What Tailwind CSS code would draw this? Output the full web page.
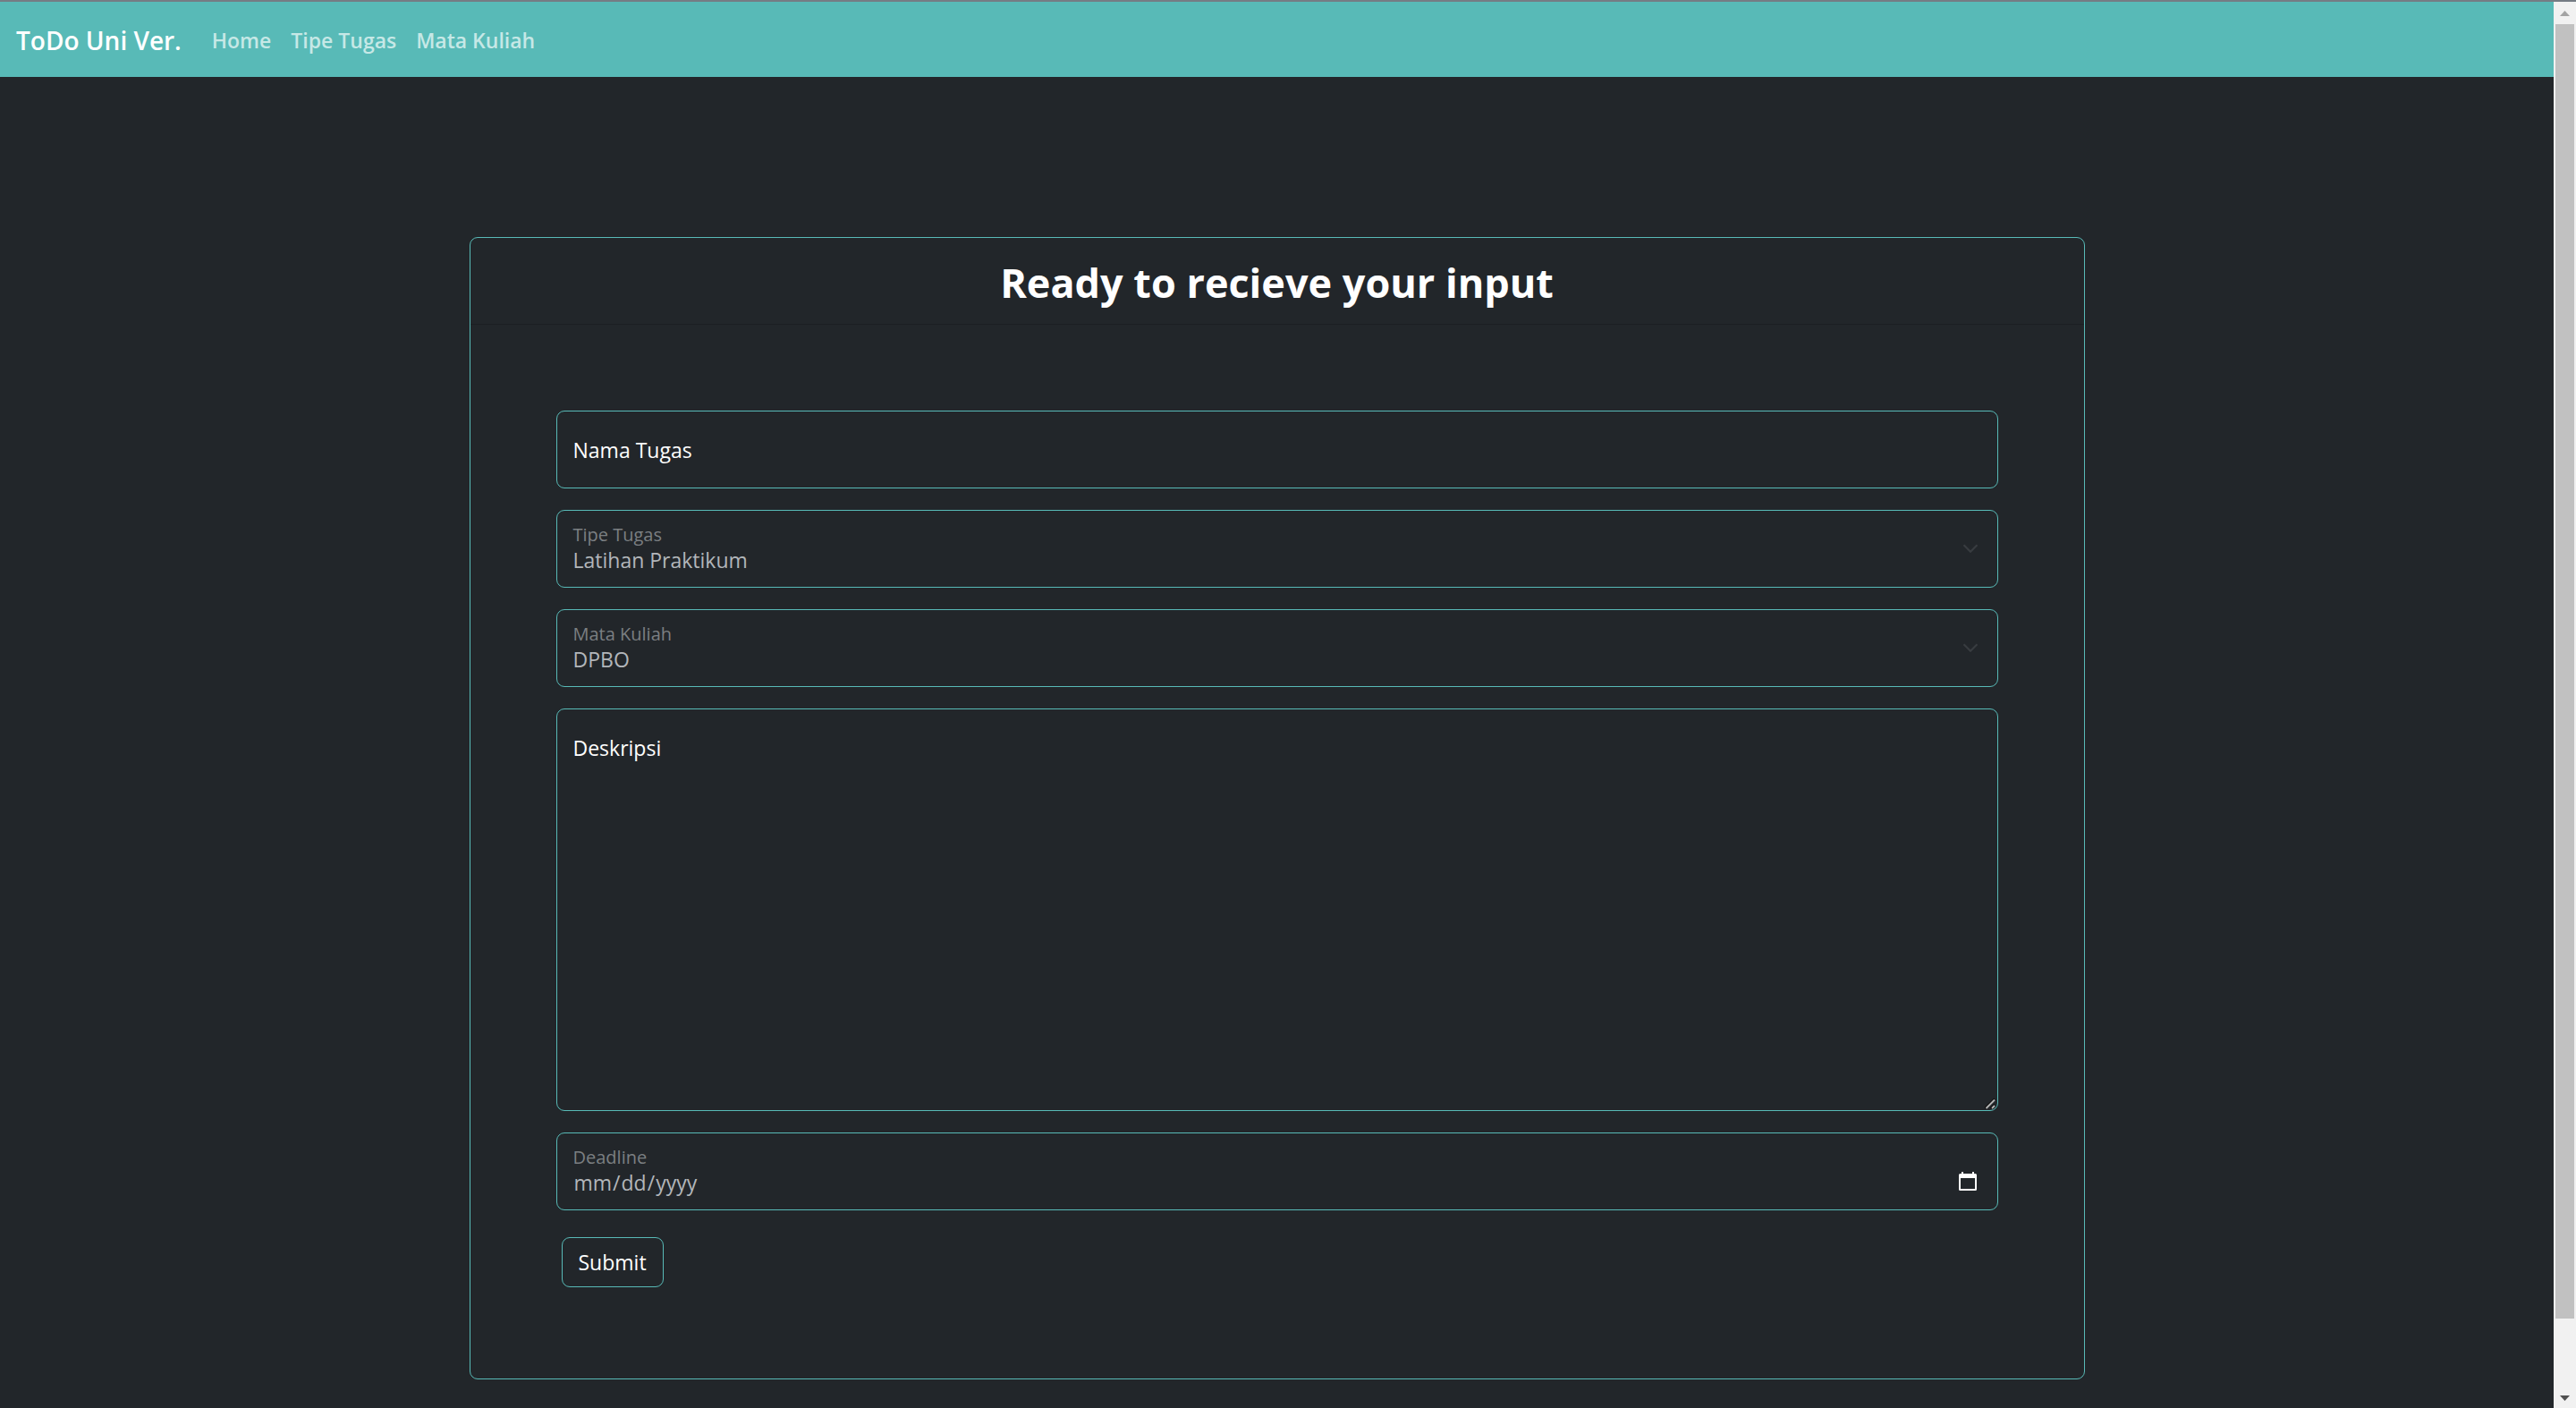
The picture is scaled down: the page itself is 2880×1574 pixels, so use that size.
<!DOCTYPE html>
<html lang="id">
<head>
<meta charset="utf-8">
<title>ToDo Uni Ver.</title>
<script src="https://cdn.jsdelivr.net/npm/@tailwindcss/browser@4"></script>
</head>
<body class="flex min-h-screen flex-col border-t-2 border-[#757c84] bg-[#22262a] font-['Open_Sans',sans-serif] text-[23px] leading-[36px] text-white">
<div class="flex grow">
  <div class="flex grow flex-col">
    <nav class="flex h-[84px] items-center bg-[#58bab7] px-[18px] pt-[2px]">
      <a href="#" class="mr-[34px] text-[28px] font-semibold">ToDo Uni Ver.</a>
      <div class="flex gap-[22px] font-semibold text-[#c6e8e6]">
        <a href="#">Home</a>
        <a href="#">Tipe Tugas</a>
        <a href="#">Mata Kuliah</a>
      </div>
    </nav>

    <main class="mx-auto mt-[179px] mb-8 w-full max-w-[1806px] rounded-[9px] border border-[#58bab7]">
      <h1 class="border-b border-[#1c1f22] pt-[22px] pb-[18px] text-center text-[45px] leading-[56px] font-bold">Ready to recieve your input</h1>

      <form class="flex flex-col gap-6 px-24 pt-24 pb-[102px]">
        <div class="flex h-[87px] items-center rounded-[9px] border border-[#58bab7] px-[18px]">
          <label for="nama">Nama Tugas</label>
          <input id="nama" type="text" class="ml-4 grow bg-transparent outline-none">
        </div>

        <div class="relative flex h-[87px] flex-col justify-center rounded-[9px] border border-[#58bab7] px-[18px] pb-[2px]">
          <label for="tipe" class="text-[20px] leading-[27px] text-[#7b7f82]">Tipe Tugas</label>
          <select id="tipe" class="h-[30px] appearance-none bg-transparent leading-[30px] text-[#b2b6ba] outline-none">
            <option>Latihan Praktikum</option>
          </select>
          <svg class="pointer-events-none absolute top-[30px] right-[18px] size-6" viewBox="0 0 16 16" fill="none" stroke="#383c40" stroke-width="1.5"><path d="m3 5.500 5 5 5-5"/></svg>
        </div>

        <div class="relative flex h-[87px] flex-col justify-center rounded-[9px] border border-[#58bab7] px-[18px] pb-[2px]">
          <label for="matkul" class="text-[20px] leading-[27px] text-[#7b7f82]">Mata Kuliah</label>
          <select id="matkul" class="h-[30px] appearance-none bg-transparent leading-[30px] text-[#b2b6ba] outline-none">
            <option>DPBO</option>
          </select>
          <svg class="pointer-events-none absolute top-[30px] right-[18px] size-6" viewBox="0 0 16 16" fill="none" stroke="#383c40" stroke-width="1.5"><path d="m3 5.500 5 5 5-5"/></svg>
        </div>

        <div class="relative flex h-[450px] flex-col rounded-[9px] border border-[#58bab7] px-[18px] pt-[25px] pb-4">
          <label for="deskripsi">Deskripsi</label>
          <textarea id="deskripsi" class="grow resize-none bg-transparent outline-none"></textarea>
          <svg class="pointer-events-none absolute right-[2px] bottom-px size-3" viewBox="0 0 12 12" fill="none"><path d="M0 11 11 0M6.500 11 11 6.500" stroke="#111" stroke-width="2"/><path d="M1.500 11 11 1.500M8 11 11 8" stroke="#b5b5b5" stroke-width="1.800"/></svg>
        </div>

        <div class="relative flex h-[87px] flex-col justify-center rounded-[9px] border border-[#58bab7] px-[18px] pb-[2px]">
          <label for="deadline" class="text-[20px] leading-[27px] text-[#7b7f82]">Deadline</label>
          <input id="deadline" type="date" class="h-[30px] bg-transparent leading-[30px] text-[#b2b6ba] outline-none [&::-webkit-calendar-picker-indicator]:hidden">
          <svg class="pointer-events-none absolute right-[23px] bottom-[21px] h-[21px] w-5" viewBox="0 0 20 21"><path fill="#fff" fill-rule="evenodd" d="M3 0h2v2h10V0h2v2h1.500A1.500 1.500 0 0 1 20 3.500v16a1.500 1.500 0 0 1-1.500 1.500h-17A1.500 1.500 0 0 1 0 19.500v-16A1.500 1.500 0 0 1 1.500 2H3zM2 7v12h16V7z"/></svg>
        </div>

        <button type="submit" class="mt-[6px] ml-[6px] h-14 self-start rounded-[9px] border border-[#58bab7] px-[18px]">Submit</button>
      </form>
    </main>
  </div>

  <!-- scroll track with its arrows and thumb -->
  <div class="flex w-[25px] shrink-0 flex-col bg-[#f1f1f1] px-[2px]" aria-hidden="true">
    <svg class="mt-[10px] mb-[9px] h-[6px] w-[11px] self-center" viewBox="0 0 11 6"><path fill="#a3a3a3" d="M5.500 0 11 6H0z"/></svg>
    <div class="grow bg-[#c1c1c1]"></div>
    <svg class="mt-[86px] mb-2 h-[6px] w-[11px] self-center" viewBox="0 0 11 6"><path fill="#505050" d="M5.500 6 11 0H0z"/></svg>
  </div>
</div>
</body>
</html>
